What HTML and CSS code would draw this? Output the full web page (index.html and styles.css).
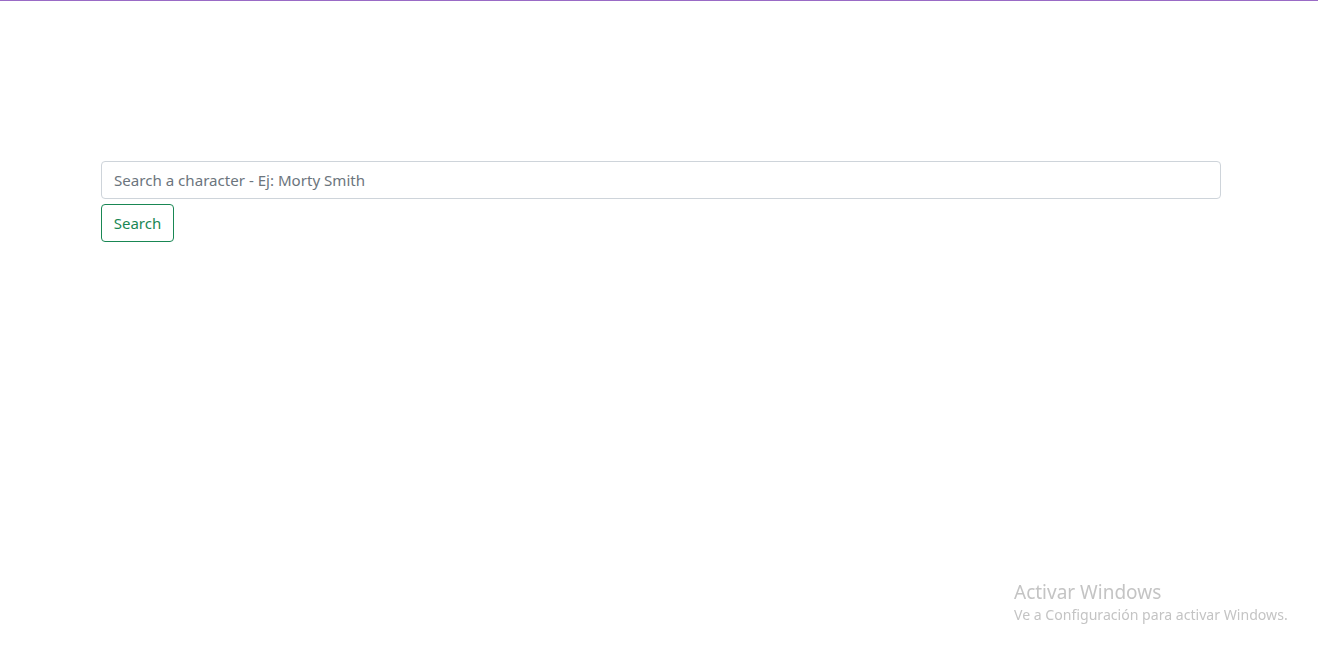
FILE: index.html
```html
<!DOCTYPE html>
<html lang="es">
<head>
<meta charset="utf-8">
<title>Rick and Morty</title>
<link rel="stylesheet" href="styles.css">
</head>
<body>
<div class="topline"></div>
<main class="container">
  <form class="search-form">
    <input class="form-control" type="text" placeholder="Search a character - Ej: Morty Smith">
    <button class="btn-outline" type="button">Search</button>
  </form>
</main>
<div class="watermark">
  <div class="wm-title">Activar Windows</div>
  <div class="wm-sub">Ve a Configuración para activar Windows.</div>
</div>
</body>
</html>
```

FILE: styles.css
```css
* { box-sizing: border-box; }
html, body { margin: 0; padding: 0; background: #fff; }
body {
  font-family: "Noto Sans", "Open Sans", sans-serif;
  font-size: 16px;
  color: #212529;
}
.topline { height: 1px; background: #9a6bc6; }
.container {
  width: 1120px;
  margin: 0 0 0 101px;
  padding-top: 160px;
}
.search-form { display: flex; flex-direction: column; align-items: flex-start; gap: 5px; }
.form-control {
  width: 100%;
  height: 38px;
  padding: 6px 12px;
  font-family: inherit;
  font-size: 15.1px;
  color: #212529;
  border: 1px solid #ced4da;
  border-radius: 4px;
  outline: none;
}
.form-control::placeholder { color: #6c757d; opacity: 1; }
.btn-outline {
  height: 38px;
  width: 73px;
  padding: 0;
  font-family: inherit;
  font-size: 15px;
  color: #198754;
  background: transparent;
  border: 1px solid #198754;
  border-radius: 4px;
}
.watermark {
  position: fixed;
  left: 1014px;
  top: 580px;
  color: #c4c4c4;
  font-family: "Noto Sans", "Open Sans", sans-serif;
}
.wm-title { font-size: 19px; line-height: 24px; }
.wm-sub { font-size: 14.1px; line-height: 20px; margin-top: 1px; }
```
